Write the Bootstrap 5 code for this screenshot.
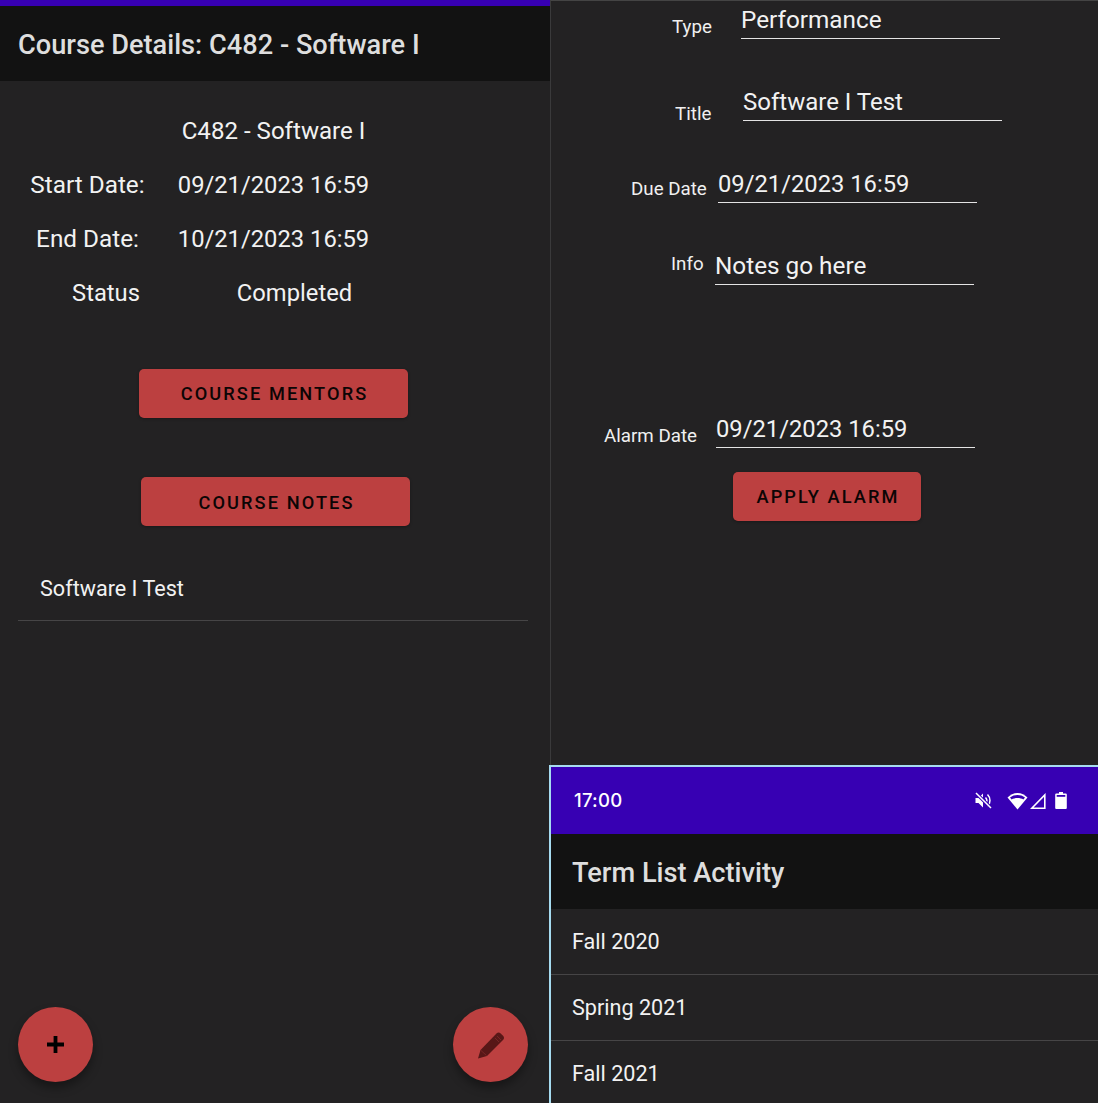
<!DOCTYPE html>
<html lang="en">
<head>
<meta charset="utf-8">
<title>Course Details</title>
<link href="https://cdn.jsdelivr.net/npm/bootstrap@5.3.0/dist/css/bootstrap.min.css" rel="stylesheet">
<style>
html,body{height:1103px;overflow:hidden}
body{background:#232223;color:#f2f2f2;font-family:Roboto,"Liberation Sans",sans-serif;width:1098px}
.screens{height:1103px}
.pane-a{width:550px;flex:none;height:1103px;position:relative}
.pane-b{width:548px;flex:none;height:1103px;border-left:1px solid #3a3a3b;border-top:1px solid #444}
.strip{height:6px;background:#3700b3}
.appbar{height:75px;background:#121212;color:#dedede;font-size:27.2px;font-weight:500;line-height:78px;padding-left:18px}
.appbar-one{line-height:79px}
.bodytxt{font-size:23.75px;line-height:30px;white-space:nowrap}
.detail{height:54px;align-items:center}
.detail-wrap{padding-top:23px}
.lbl-cell{width:175px;flex:none;text-align:center;font-size:24.3px}
.val-cell{width:197px;flex:none;text-align:center}
.val-head{font-size:24.1px}
.lbl-wide{width:212px;font-size:23.75px}
.val-narrow{width:165px}
.red-btn{background:#bc4040;color:#0c0505;border:0;border-radius:5px;height:49px;width:269px;font-size:18.2px;font-weight:500;letter-spacing:2.1px;padding:0 0 0 2px;box-shadow:0 1px 3px rgba(0,0,0,.3);text-transform:uppercase;display:flex;align-items:center;justify-content:center}
.red-btn:hover,.red-btn:active{background:#bc4040;color:#0c0505}
.btn-one{margin:49px 0 0 139px}
.btn-two{margin:59px 0 0 141px;padding-top:2px}
.course-row{margin:36px 22px 0 18px;height:59px;border-bottom:1px solid #464546;padding-left:22px;font-size:21.6px;line-height:54px}
.fab{position:absolute;width:75px;height:75px;border-radius:50%;background:#bc4040;top:1007px;box-shadow:0 6px 10px rgba(0,0,0,.35);display:flex;align-items:center;justify-content:center;border:0;padding:0}
.fab-add{left:18px}
.fab-edit{left:453px}
.form-area{height:764px}
.frow{display:flex;align-items:flex-start;height:38px}
.flabel{font-size:18.75px;line-height:24px;white-space:nowrap;color:#f0f0f0}
.finput{width:259px;height:38px;border-bottom:1.5px solid #e4e4e4;font-size:23.75px;line-height:39px;color:#f2f2f2;white-space:nowrap}
.finput-wide{font-size:24.3px;line-height:37px}
.finput-mid{font-size:24px}
.r1{margin-left:121px}
.r1 .flabel{margin-top:14px;width:69px}
.r2{margin-left:124px;margin-top:44px}
.r2 .flabel{margin-top:19px;width:68px}
.r3{margin-left:80px;margin-top:44px}
.r3 .flabel{width:87px;margin-top:12px}
.r4{margin-left:120px;margin-top:44px}
.r4 .flabel{width:44px;margin-top:5px}
.r5{margin-left:53px;margin-top:125px}
.r5 .flabel{width:112px;margin-top:14px}
.apply{margin:24px 0 0 182px;width:188px}
.list-shell{border-top:2px solid #a6dbf0;border-left:2px solid #a6dbf0;margin-left:-2px;height:338px;overflow:hidden}
.statusbar{height:67px;background:#3700b3;color:#fff;display:flex;align-items:center;justify-content:space-between;padding:0 31px 0 23px}
.clock{font-family:Inter,Roboto,sans-serif;font-size:18.6px;font-weight:500;letter-spacing:.2px}
.appbar-two{padding-left:21px}
.term-list{background:#232223}
.term-item{background:#232223;color:#f2f2f2;border:0;border-bottom:1px solid #464546;height:66px;font-size:21.6px;line-height:65px;padding:0 0 0 21px;border-radius:0}
.icon-mute{margin-right:15px}
.icon-signal{margin-left:2px}
.icon-batt{margin-left:9px}
</style>
</head>
<body>
<div class="screens d-flex">
  <div class="pane-a">
    <div class="strip"></div>
    <div class="appbar appbar-one">Course Details: C482 - Software I</div>
    <div class="detail-wrap bodytxt">
      <div class="d-flex detail"><div class="lbl-cell"></div><div class="val-cell val-head">C482 - Software I</div></div>
      <div class="d-flex detail"><div class="lbl-cell">Start Date:</div><div class="val-cell">09/21/2023 16:59</div></div>
      <div class="d-flex detail"><div class="lbl-cell">End Date:</div><div class="val-cell">10/21/2023 16:59</div></div>
      <div class="d-flex detail"><div class="lbl-cell lbl-wide">Status</div><div class="val-cell val-narrow">Completed</div></div>
    </div>
    <button class="btn red-btn btn-one">Course Mentors</button>
    <button class="btn red-btn btn-two">Course Notes</button>
    <div class="course-row">Software I Test</div>
    <button class="fab fab-add" aria-label="Add"><svg width="17" height="17" viewBox="0 0 17 17"><path d="M6.600 0h3.800v6.600H17v3.800h-6.600V17H6.600v-6.600H0V6.600h6.600z" fill="#000"/></svg></button>
    <button class="fab fab-edit" aria-label="Edit"><svg width="28" height="28" viewBox="0 0 28 28"><path d="M1 27.500L3.500 19 19.500 2.500a3 3 0 0 1 4.200 0l2.300 2.300a3 3 0 0 1 0 4.200L10 25z" fill="#581717"/><path d="M18 7l4 4M20 5l4 4M4 19.500l5.500 5" stroke="#8a3030" stroke-width=".6" fill="none"/></svg></button>
  </div>
  <div class="pane-b">
    <div class="form-area">
      <div class="frow r1"><div class="flabel">Type</div><div class="finput finput-wide">Performance</div></div>
      <div class="frow r2"><div class="flabel">Title</div><div class="finput finput-mid">Software I Test</div></div>
      <div class="frow r3"><div class="flabel">Due Date</div><div class="finput">09/21/2023 16:59</div></div>
      <div class="frow r4"><div class="flabel">Info</div><div class="finput finput-wide">Notes go here</div></div>
      <div class="frow r5"><div class="flabel">Alarm Date</div><div class="finput">09/21/2023 16:59</div></div>
      <button class="btn red-btn apply">Apply Alarm</button>
    </div>
    <div class="list-shell">
      <div class="statusbar">
        <span class="clock">17:00</span>
        <span class="d-flex align-items-center">
          <svg width="17" height="17" viewBox="0 0 17 17" class="icon-mute"><path d="M.5 6v5h3l4.500 4.500V1.500L3.500 6z" fill="#fff"/><path d="M10.500 5.500a4.500 4.500 0 0 1 0 6M12.500 2.500a8.500 8.500 0 0 1 0 12" fill="none" stroke="#fff" stroke-width="1.500"/><path d="M1 1l15 15" stroke="#3700b3" stroke-width="3.400"/><path d="M1 1l15 15" stroke="#fff" stroke-width="1.500"/></svg>
          <svg width="21" height="18" viewBox="0 0 21 18"><path d="M10.500 17.500L.5 5.500C3.200 2.900 6.700 1 10.500 1s7.300 1.900 10 4.500z" fill="#fff"/><path d="M3 5.500C5.200 3.800 7.700 3 10.500 3s5.300.8 7.500 2.500l-1.600 2C14.800 6.500 12.700 6 10.500 6s-4.300.5-5.900 1.500z" fill="#3700b3"/></svg>
          <svg width="16" height="16" viewBox="0 0 16 16" class="icon-signal"><path d="M14.800 1.900V15.200H1.800z" fill="none" stroke="#fff" stroke-width="1.600"/></svg>
          <svg width="12" height="17" viewBox="0 0 12 17" class="icon-batt"><path d="M4 0h4v1.500h2.800a1 1 0 0 1 1 1V16a1 1 0 0 1-1 1H1.200a1 1 0 0 1-1-1V2.500a1 1 0 0 1 1-1H4z" fill="#fff"/><rect x="1.700" y="3" width="8.600" height="1.800" fill="#3700b3"/></svg>
        </span>
      </div>
      <div class="appbar appbar-two">Term List Activity</div>
      <div class="list-group term-list">
        <div class="list-group-item term-item">Fall 2020</div>
        <div class="list-group-item term-item">Spring 2021</div>
        <div class="list-group-item term-item">Fall 2021</div>
      </div>
    </div>
  </div>
</div>
<script src="https://cdn.jsdelivr.net/npm/bootstrap@5.3.0/dist/js/bootstrap.bundle.min.js"></script>
</body>
</html>
